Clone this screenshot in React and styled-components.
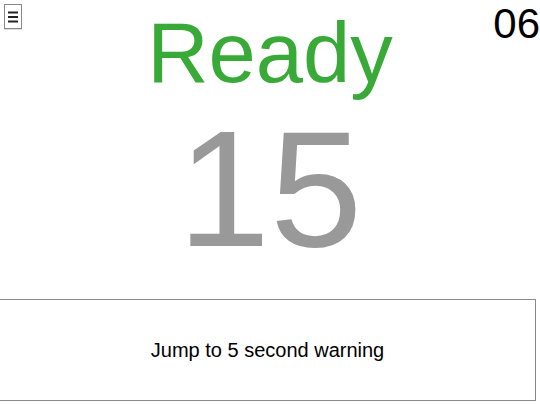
import React from 'react';
import styled, { createGlobalStyle } from 'styled-components';

const GlobalStyle = createGlobalStyle`
  html, body {
    margin: 0;
    padding: 0;
    background: #fff;
    font-family: "Liberation Sans", Arial, sans-serif;
    overflow: hidden;
  }
`;

const Page = styled.div`
  width: 540px;
  height: 405px;
  display: flex;
  flex-direction: column;
  align-items: stretch;
`;

const Header = styled.div`
  display: grid;
  grid-template-columns: 1fr auto 1fr;
  align-items: start;
  height: 95px;
`;

const MenuButton = styled.button`
  justify-self: start;
  margin: 4px 0 0 4px;
  width: 18px;
  height: 25px;
  padding: 0;
  border: 1px solid #888;
  background: #fff;
  box-shadow: 0 1px 0 #ddd;
  display: flex;
  align-items: center;
  justify-content: center;

  svg {
    display: block;
  }
`;

const Status = styled.div`
  margin-top: 10px;
  font-size: 85px;
  line-height: 85px;
  color: ${p => p.color};
`;

const Clock = styled.div`
  justify-self: end;
  margin-top: 3px;
  font-size: 42px;
  line-height: 42px;
  color: #000;
`;

const Count = styled.div`
  margin-top: 11px;
  text-align: center;
  font-size: 166px;
  line-height: 166px;
  color: #999;
`;

const JumpButton = styled.button`
  margin: 27px 0 0 -1px;
  width: 537px;
  height: 102px;
  border: 1px solid #8a8a8a;
  background: #fff;
  color: #000;
  font-family: "Liberation Sans", Arial, sans-serif;
  font-size: 20px;
  padding: 0;
`;

function MenuIcon() {
  return (
    <svg width="10" height="12" viewBox="0 0 10 12">
      <g stroke="#222" strokeWidth="2">
        <line x1="0" y1="1.5" x2="10" y2="1.5" />
        <line x1="0" y1="6" x2="10" y2="6" />
        <line x1="0" y1="10.5" x2="10" y2="10.5" />
      </g>
    </svg>
  );
}

export default function App() {
  return (
    <Page>
      <GlobalStyle />
      <Header>
        <MenuButton aria-label="Menu">
          <MenuIcon />
        </MenuButton>
        <Status color="#39aa37">Ready</Status>
        <Clock>06</Clock>
      </Header>
      <Count>15</Count>
      <JumpButton>Jump to 5 second warning</JumpButton>
    </Page>
  );
}
